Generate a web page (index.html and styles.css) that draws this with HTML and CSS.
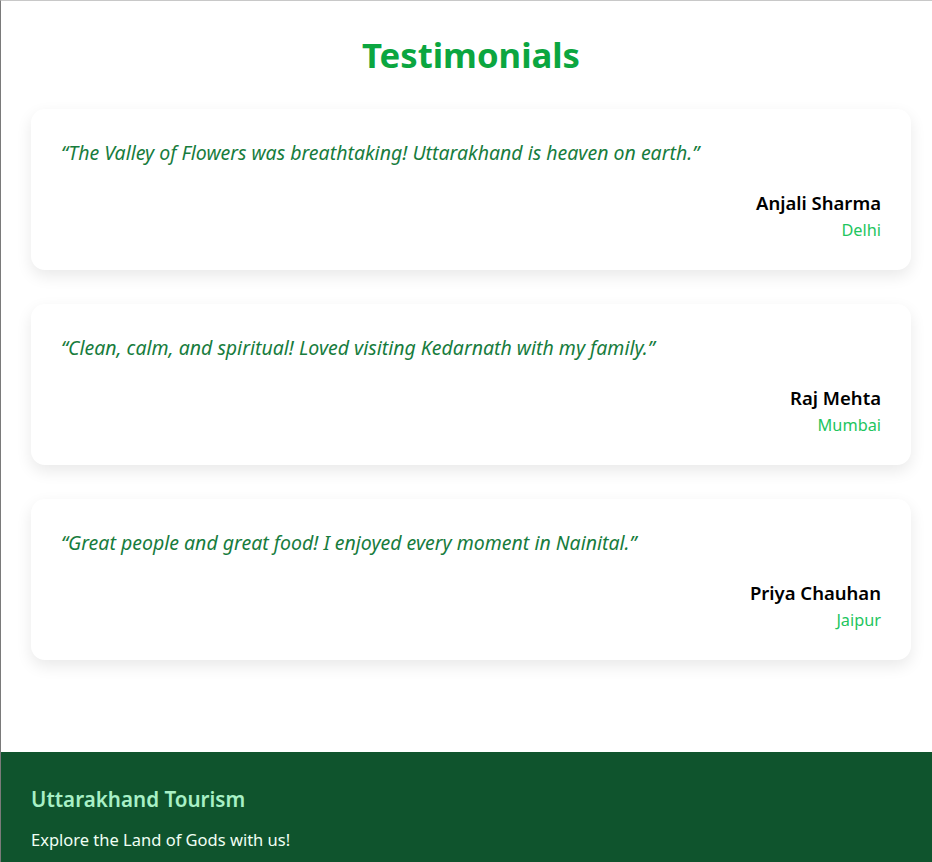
FILE: index.html
```html
<!DOCTYPE html>
<html lang="en">
<head>
<meta charset="utf-8">
<title>Testimonials</title>
<link rel="stylesheet" href="styles.css">
</head>
<body>
<div class="page">
  <section class="testimonials">
    <h2 class="title">Testimonials</h2>
    <div class="card">
      <p class="quote">“The Valley of Flowers was breathtaking! Uttarakhand is heaven on earth.”</p>
      <p class="name">Anjali Sharma</p>
      <p class="city">Delhi</p>
    </div>
    <div class="card">
      <p class="quote">“Clean, calm, and spiritual! Loved visiting Kedarnath with my family.”</p>
      <p class="name">Raj Mehta</p>
      <p class="city">Mumbai</p>
    </div>
    <div class="card">
      <p class="quote">“Great people and great food! I enjoyed every moment in Nainital.”</p>
      <p class="name">Priya Chauhan</p>
      <p class="city">Jaipur</p>
    </div>
  </section>
  <footer class="footer">
    <h3 class="footer-title">Uttarakhand Tourism</h3>
    <p class="footer-text">Explore the Land of Gods with us!</p>
  </footer>
</div>
</body>
</html>
```
FILE: styles.css
```css
html, body {
  margin: 0;
  padding: 0;
  background: #fff;
}
body {
  font-family: "Segoe UI", "Noto Sans", "Open Sans", sans-serif;
}
.page {
  border-top: 1px solid #c8c8c8;
  border-left: 1px solid #7a7a7a;
  min-height: 861px;
  box-sizing: border-box;
}
.testimonials {
  padding: 30px 21px 62px 30px;
}
.title {
  margin: 0 0 30px;
  text-align: center;
  color: #0ba640;
  font-size: 34.7px;
  font-weight: 700;
  line-height: 48px;
}
.card {
  background: #fff;
  border-radius: 14px;
  box-shadow: 0 6px 16px rgba(0, 0, 0, 0.09);
  padding: 30px 30px 28px;
  margin-bottom: 34px;
}
.card:last-child {
  margin-bottom: 30px;
}
.quote {
  margin: 0 0 23px;
  font-style: italic;
  font-size: 19.5px;
  line-height: 27px;
  color: #177c3d;
}
.name {
  margin: 0;
  text-align: right;
  font-weight: 600;
  font-size: 18.5px;
  line-height: 27px;
  color: #000;
}
.city {
  margin: 3px 0 0;
  text-align: right;
  font-size: 16.3px;
  line-height: 23px;
  color: #22c55e;
}
.footer {
  background: #0f542d;
  padding: 32px 30px 20px;
}
.footer-title {
  margin: 0 0 14px;
  color: #a8f0c6;
  font-size: 20.6px;
  font-weight: 600;
  line-height: 30px;
}
.footer-text {
  margin: 0;
  color: #f0fff4;
  font-size: 16.5px;
  line-height: 24px;
}
```
